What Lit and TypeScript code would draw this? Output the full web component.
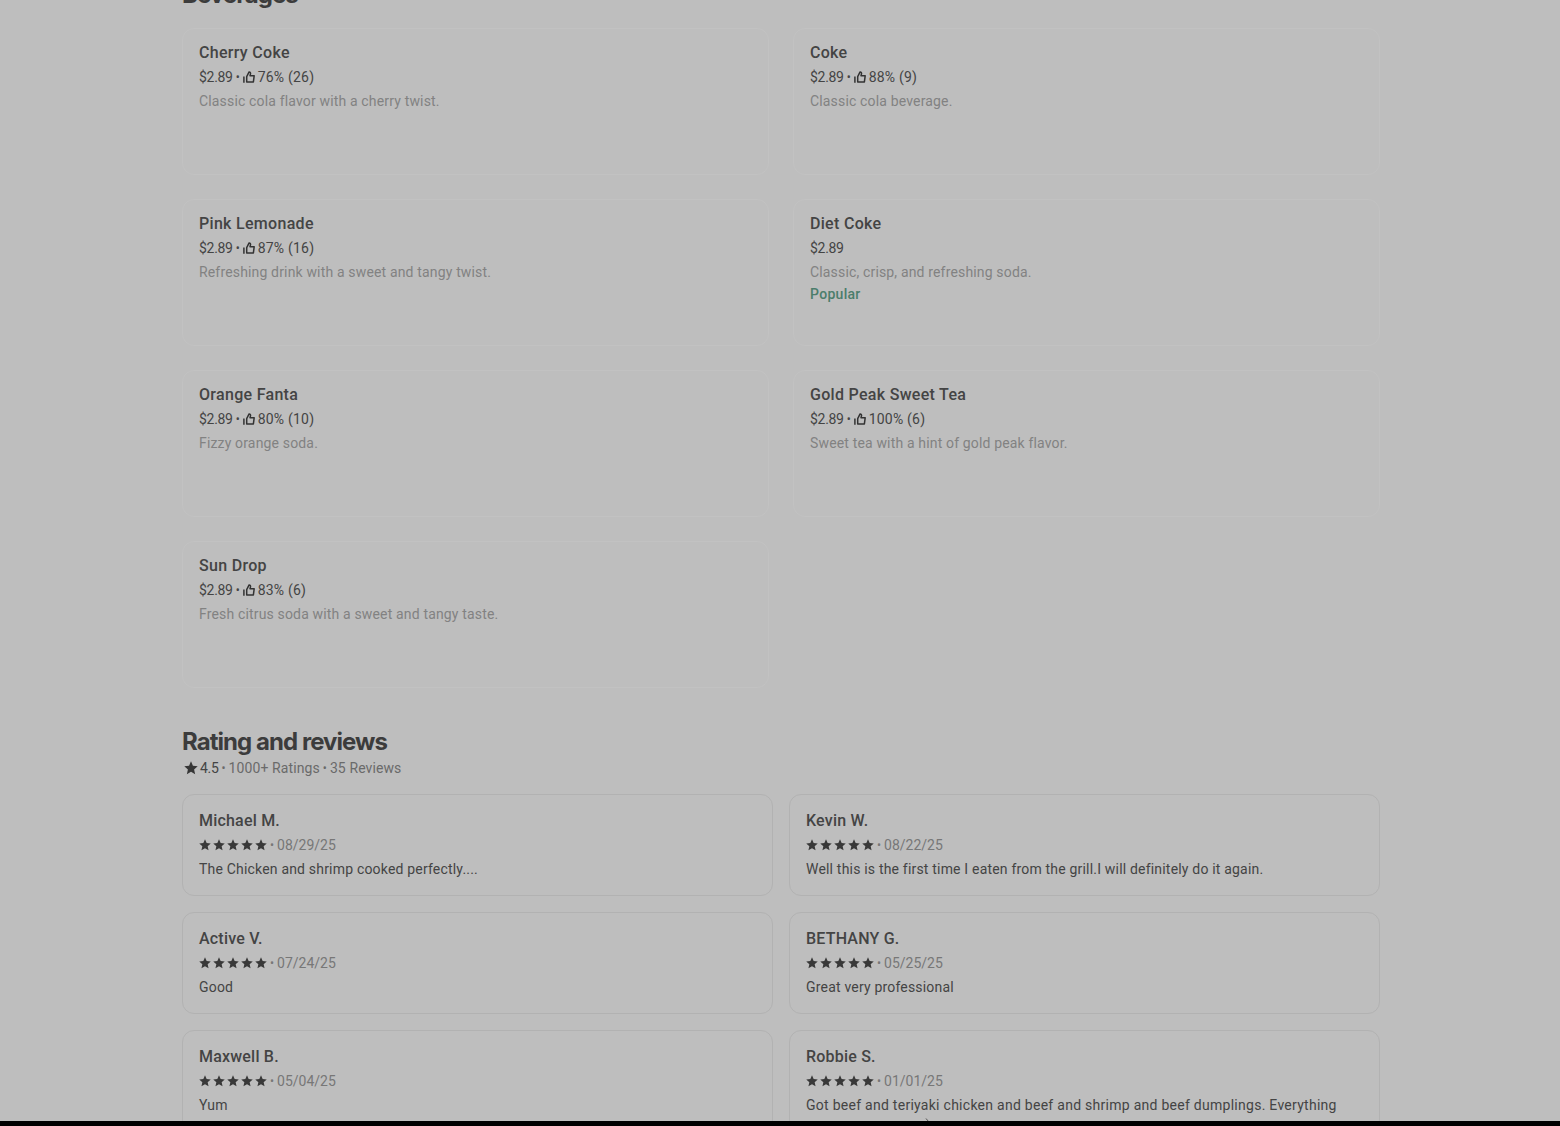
import { html, LitElement, css, svg, nothing } from 'lit';
import { customElement, property } from 'lit/decorators.js';

interface MenuItem {
  name: string;
  price: string;
  rating?: string;
  description: string;
  popular?: boolean;
}

interface Review {
  author: string;
  date: string;
  text: string;
  more?: boolean;
}

const ITEMS: MenuItem[] = [
  { name: 'Cherry Coke', price: '$2.89', rating: '76% (26)', description: 'Classic cola flavor with a cherry twist.' },
  { name: 'Coke', price: '$2.89', rating: '88% (9)', description: 'Classic cola beverage.' },
  { name: 'Pink Lemonade', price: '$2.89', rating: '87% (16)', description: 'Refreshing drink with a sweet and tangy twist.' },
  { name: 'Diet Coke', price: '$2.89', description: 'Classic, crisp, and refreshing soda.', popular: true },
  { name: 'Orange Fanta', price: '$2.89', rating: '80% (10)', description: 'Fizzy orange soda.' },
  { name: 'Gold Peak Sweet Tea', price: '$2.89', rating: '100% (6)', description: 'Sweet tea with a hint of gold peak flavor.' },
  { name: 'Sun Drop', price: '$2.89', rating: '83% (6)', description: 'Fresh citrus soda with a sweet and tangy taste.' },
];

const REVIEWS: Review[] = [
  { author: 'Michael M.', date: '08/29/25', text: 'The Chicken and shrimp cooked perfectly....' },
  { author: 'Kevin W.', date: '08/22/25', text: 'Well this is the first time I eaten from the grill.I will definitely do it again.' },
  { author: 'Active V.', date: '07/24/25', text: 'Good' },
  { author: 'BETHANY G.', date: '05/25/25', text: 'Great very professional' },
  { author: 'Maxwell B.', date: '05/04/25', text: 'Yum' },
  { author: 'Robbie S.', date: '01/01/25', text: 'Got beef and teriyaki chicken and beef and shrimp and beef dumplings. Everything', more: true },
];

const STAR = svg`<path d="M12 .5l3.3 7.6 8.2.8-6.2 5.5 1.8 8.1L12 18.3l-7.1 4.2 1.8-8.1L.5 8.9l8.2-.8z"/>`;

@customElement('menu-item')
export class MenuItemCard extends LitElement {

  @property({ attribute: false }) item!: MenuItem;

  static styles = css`
    :host {
      display: block;
      box-sizing: border-box;
      height: 147px;
      padding: 14px 16px 12px;
      border: 1px solid #c2c2c2;
      border-radius: 12px;
      font-size: 14px;
      line-height: 20px;
      color: #444;
    }

    .name {
      font-size: 16px;
      font-weight: 500;
      letter-spacing: 0.3px;
      margin-bottom: 4px;
    }

    .meta {
      display: flex;
      align-items: center;
      margin-bottom: 4px;
      white-space: pre;
    }

    .price {
      letter-spacing: -0.3px;
    }

    .dot {
      margin: 0 3px 0 3px;
      padding-top: 1px;
      font-size: 12px;
      line-height: 19px;
    }

    .rating {
      letter-spacing: 0.2px;
    }

    .meta svg {
      width: 12px;
      height: 12px;
      margin-right: 3px;
      fill: none;
      stroke: #333;
      stroke-width: 1.5;
      stroke-linejoin: round;
    }

    .description {
      letter-spacing: 0.16px;
      color: #828282;
    }

    .popular {
      margin-top: 2px;
      font-weight: 500;
      letter-spacing: 0.3px;
      color: #4b7d6b;
    }
  `;

  render() {
    const { name, price, rating, description, popular } = this.item;
    return html`
      <div class="name">${name}</div>
      <div class="meta"><span class="price">${price}</span>${rating ? html`<span class="dot">•</span><svg viewBox="0 0 12 12">
          <path d="M.9 5.4v6.3M3.7 10.9V5.6L6.1.9c1.2.1 1.7 1 1.4 2L7 4.7h4.2l-.8 6.2z"/>
        </svg><span class="rating">${rating}</span>` : nothing}</div>
      <div class="description">${description}</div>
      ${popular ? html`<div class="popular">Popular</div>` : nothing}
    `;
  }
}

@customElement('review-card')
export class ReviewCard extends LitElement {

  @property({ attribute: false }) review!: Review;

  static styles = css`
    :host {
      display: block;
      position: relative;
      box-sizing: border-box;
      height: 102px;
      padding: 16px 16px 14px;
      border: 1px solid #b2b2b2;
      border-radius: 12px;
      font-size: 14px;
      line-height: 20px;
      color: #444;
    }

    .author {
      font-size: 16px;
      font-weight: 500;
      letter-spacing: 0.2px;
      margin-bottom: 4px;
    }

    .meta {
      display: flex;
      align-items: center;
      gap: 2px;
      margin-bottom: 4px;
      color: #777;
      white-space: pre;
    }

    .meta svg {
      width: 12px;
      height: 12px;
      fill: #393939;
    }

    .dot {
      margin: 0 1px;
      padding-top: 1px;
      font-size: 12px;
      line-height: 19px;
    }

    .text {
      letter-spacing: 0.19px;
      white-space: nowrap;
    }

    .text.long {
      letter-spacing: 0.27px;
    }

    /* tip of the continued text under the last line */
    .more {
      position: absolute;
      left: 135px;
      top: 87px;
      width: 5px;
      height: 4px;
      fill: none;
      stroke: #555;
    }
  `;

  render() {
    const { author, date, text, more } = this.review;
    return html`
      <div class="author">${author}</div>
      <div class="meta">
        ${[1, 2, 3, 4, 5].map(() => html`<svg viewBox="0 0 24 24">${STAR}</svg>`)}<span class="dot">•</span><span>${date}</span>
      </div>
      <div class="text ${more ? 'long' : ''}">${text}</div>
      ${more ? html`<svg class="more" viewBox="0 0 5 4"><path d="M1 .5l2.5 3"/></svg>` : nothing}
    `;
  }
}

@customElement('app-root')
export class AppRoot extends LitElement {

  static styles = css`
    :host {
      display: flex;
      flex-direction: column;
      box-sizing: border-box;
      height: 1126px;
      overflow: hidden;
      background-color: #bebebe;
      font-family: Roboto, "Liberation Sans", sans-serif;
      color: #444;
    }

    main {
      flex: 1;
      min-height: 0;
      overflow: hidden;
      padding: 0 180px 0 182px;
    }

    h2 {
      margin: 0;
      font-family: Inter, "Liberation Sans", sans-serif;
      font-size: 24px;
      font-weight: 700;
      line-height: 32px;
      letter-spacing: -0.95px;
      color: #3c3c3c;
    }

    .beverages {
      margin-top: -21px;
    }

    .items {
      display: grid;
      grid-template-columns: 1fr 1fr;
      gap: 24px;
      margin-top: 17px;
    }

    .reviews-title {
      margin-top: 38px;
    }

    .summary {
      display: flex;
      align-items: center;
      padding-left: 2px;
      margin-bottom: 16px;
      font-size: 14px;
      line-height: 20px;
      white-space: pre;
      color: #6a6a6a;
    }

    .summary svg {
      width: 14px;
      height: 14px;
      margin-right: 2px;
      fill: #363636;
    }

    .score {
      letter-spacing: -0.3px;
      color: #444;
    }

    .dot {
      margin: 0 3px;
      padding-top: 1px;
      font-size: 12px;
      line-height: 19px;
    }

    .count {
      letter-spacing: 0.1px;
    }

    .reviews {
      display: grid;
      grid-template-columns: 1fr 1fr;
      gap: 16px;
    }

    .bottom-bar {
      height: 5px;
      background-color: #000;
    }
  `;

  render() {
    return html`
      <main>
        <h2 class="beverages">Beverages</h2>
        <section class="items">
          ${ITEMS.map((item) => html`<menu-item .item=${item}></menu-item>`)}
        </section>
        <h2 class="reviews-title">Rating and reviews</h2>
        <div class="summary">
          <svg viewBox="0 0 24 24">${STAR}</svg><span class="score">4.5</span><span class="dot">•</span><span class="count">1000+ Ratings</span><span class="dot">•</span><span class="count">35 Reviews</span>
        </div>
        <section class="reviews">
          ${REVIEWS.map((review) => html`<review-card .review=${review}></review-card>`)}
        </section>
      </main>
      <div class="bottom-bar"></div>
    `;
  }
}

declare global {
  interface HTMLElementTagNameMap {
    'app-root': AppRoot,
    'menu-item': MenuItemCard,
    'review-card': ReviewCard,
  }
}
